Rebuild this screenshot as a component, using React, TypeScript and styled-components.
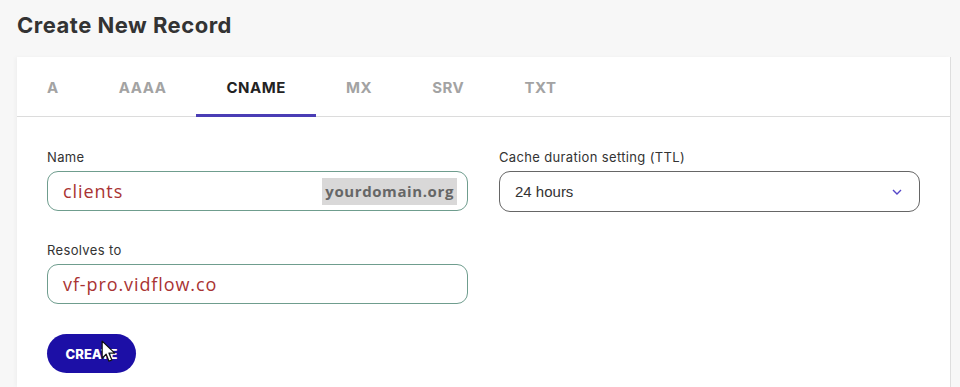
import styled, { createGlobalStyle } from 'styled-components';

const GlobalStyle = createGlobalStyle`
  html, body {
    margin: 0;
    padding: 0;
    background: #f7f7f7;
    font-family: 'Inter', 'Open Sans', sans-serif;
  }
  * { box-sizing: border-box; }
`;

const Page = styled.div`
  height: 387px;
  overflow: hidden;
  display: flex;
  flex-direction: column;
`;

const Title = styled.h1`
  margin: 0;
  padding: 12px 17px 0;
  height: 57px;
  font-size: 22px;
  font-weight: 700;
  color: #333;
  letter-spacing: 0.5px;
`;

const Card = styled.div`
  margin-left: 17px;
  width: 934px;
  flex: 1;
  background: #fff;
  border-right: 1px solid #dedede;
  box-shadow: -2px 0 4px rgba(0, 0, 0, 0.03);
`;

const Tabs = styled.div`
  display: flex;
  height: 60px;
  border-bottom: 1px solid #dcdcdc;
`;

const Tab = styled.div<{ $active?: boolean }>`
  padding: 3px 30px 0;
  display: flex;
  align-items: center;
  font-size: 15px;
  font-weight: 700;
  letter-spacing: 0.55px;
  color: ${(p) => (p.$active ? '#222' : '#a3a3a3')};
  border-bottom: 3px solid ${(p) => (p.$active ? '#4a3db5' : 'transparent')};
  margin-bottom: -1px;
`;

const Body = styled.div`
  padding: 32px 30px 0;
  display: grid;
  grid-template-columns: 421px 421px;
  column-gap: 31px;
  row-gap: 30px;
`;

const Field = styled.div`
  display: flex;
  flex-direction: column;
`;

const Label = styled.label`
  font-size: 13px;
  color: #333;
  margin-bottom: 6px;
  letter-spacing: 0.35px;
`;

const InputBox = styled.div`
  height: 40px;
  border: 1px solid #6f9d8e;
  border-radius: 11px;
  display: flex;
  align-items: center;
  padding: 0 10px 0 15px;
`;

const InputText = styled.span`
  flex: 1;
  font-family: 'Open Sans', sans-serif;
  font-size: 18px;
  color: #a93333;
  letter-spacing: 0.9px;
`;

const Suffix = styled.span`
  background: #d9d8d8;
  color: #666;
  font-family: 'Open Sans', sans-serif;
  font-weight: 700;
  font-size: 15px;
  letter-spacing: 0.6px;
  height: 27px;
  display: flex;
  align-items: center;
  padding: 0 3px;
`;

const SelectBox = styled.div`
  height: 41px;
  border: 1px solid #666;
  border-radius: 11px;
  display: flex;
  align-items: center;
  justify-content: space-between;
  padding: 0 17px 0 15px;
  font-family: 'Liberation Sans', Arial, sans-serif;
  font-size: 15px;
  color: #333;
`;

const Actions = styled.div`
  padding: 30px 30px 0;
  position: relative;
`;

const Button = styled.button`
  width: 89px;
  height: 39px;
  border: none;
  border-radius: 20px;
  background: #1c0fa6;
  color: #fff;
  font-family: 'Inter', sans-serif;
  font-weight: 800;
  font-size: 13px;
  letter-spacing: 0px;
  padding: 0;
`;

const Cursor = styled.svg`
  position: absolute;
  left: 84px;
  top: 36px;
`;

const tabs = ['A', 'AAAA', 'CNAME', 'MX', 'SRV', 'TXT'];

export default function App() {
  return (
    <Page>
      <GlobalStyle />
      <Title>Create New Record</Title>
      <Card>
        <Tabs>
          {tabs.map((t) => (
            <Tab key={t} $active={t === 'CNAME'}>
              {t}
            </Tab>
          ))}
        </Tabs>
        <Body>
          <Field>
            <Label>Name</Label>
            <InputBox>
              <InputText>clients</InputText>
              <Suffix>yourdomain.org</Suffix>
            </InputBox>
          </Field>
          <Field>
            <Label>Cache duration setting (TTL)</Label>
            <SelectBox>
              <span>24 hours</span>
              <svg width="10" height="6" viewBox="0 0 10 6">
                <path d="M1 1 L5 5 L9 1" fill="none" stroke="#5546c8" strokeWidth="1.4" />
              </svg>
            </SelectBox>
          </Field>
          <Field>
            <Label>Resolves to</Label>
            <InputBox>
              <InputText>vf-pro.vidflow.co</InputText>
            </InputBox>
          </Field>
        </Body>
        <Actions>
          <Button>CREATE</Button>
          <Cursor width="16" height="24" viewBox="0 0 14 21">
            <path d="M1 1 L1 16 L4.5 12.5 L7 18.5 L9.5 17.5 L7 11.5 L12 11.5 Z" fill="#fff" stroke="#111" strokeWidth="1.1" strokeLinejoin="round" />
          </Cursor>
        </Actions>
      </Card>
    </Page>
  );
}
